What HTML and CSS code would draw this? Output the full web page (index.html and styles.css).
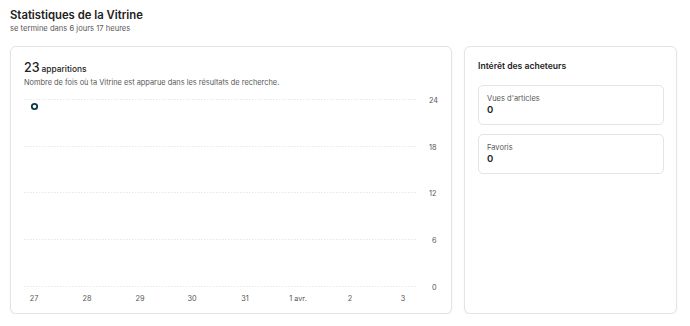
FILE: index.html
```html
<!DOCTYPE html>
<html lang="fr">
<head>
<meta charset="utf-8">
<title>Statistiques de la Vitrine</title>
<link rel="stylesheet" href="styles.css">
</head>
<body>
<header class="page-head">
  <h1 class="page-title">Statistiques de la Vitrine</h1>
  <p class="page-sub">se termine dans 6 jours 17 heures</p>
</header>
<main class="grid">
  <section class="card card-main">
    <h2 class="metric"><span class="metric-num">23</span><span class="metric-label">apparitions</span></h2>
    <p class="metric-desc">Nombre de fois où ta Vitrine est apparue dans les résultats de recherche.</p>
    <svg class="chart" width="416" height="214" viewBox="0 0 416 214">
      <g class="grid-lines">
        <line x1="0" y1="7.5" x2="392" y2="7.5"/>
        <line x1="0" y1="54.5" x2="392" y2="54.5"/>
        <line x1="0" y1="100.5" x2="392" y2="100.5"/>
        <line x1="0" y1="147.5" x2="392" y2="147.5"/>
        <line x1="0" y1="194.5" x2="392" y2="194.5"/>
      </g>
      <g class="y-labels">
        <text x="405" y="10.5">24</text>
        <text x="405" y="57.5">18</text>
        <text x="405" y="103.5">12</text>
        <text x="408" y="150.5">6</text>
        <text x="408" y="197.5">0</text>
      </g>
      <g class="x-labels">
        <text x="10" y="209">27</text>
        <text x="63" y="209">28</text>
        <text x="116" y="209">29</text>
        <text x="168" y="209">30</text>
        <text x="221" y="209">31</text>
        <text x="274" y="209">1 avr.</text>
        <text x="326" y="209">2</text>
        <text x="379" y="209">3</text>
      </g>
      <circle class="dot" cx="10.5" cy="14.5" r="2.7"/>
    </svg>
  </section>
  <section class="card card-side">
    <h2 class="side-title">Intérêt des acheteurs</h2>
    <div class="stat">
      <div class="stat-label">Vues d'articles</div>
      <div class="stat-value">0</div>
    </div>
    <div class="stat">
      <div class="stat-label">Favoris</div>
      <div class="stat-value">0</div>
    </div>
  </section>
</main>
</body>
</html>
```
FILE: styles.css
```css
* { box-sizing: border-box; }
html, body { margin: 0; padding: 0; background: #fff; }
body {
  font-family: Inter, "Noto Sans", sans-serif;
  color: #222;
  padding: 8px 13px 0 10px;
}
.page-title {
  margin: 0;
  font-size: 11.3px;
  font-weight: 600;
  line-height: 15px;
  color: #222;
}
.page-sub {
  margin: 0;
  font-size: 7.6px;
  line-height: 11px;
  color: #595959;
}
.grid {
  display: grid;
  grid-template-columns: 442px 213px;
  column-gap: 12px;
  margin-top: 12px;
}
.card {
  border: 1px solid #e4e4e4;
  border-radius: 6px;
  box-shadow: 0 1px 2px rgba(0,0,0,0.06);
  height: 268px;
  background: #fff;
}
.card-main {
  padding: 13px 0 0 13px;
}
.metric {
  margin: 0;
  display: flex;
  align-items: baseline;
  gap: 2px;
  height: 15px;
  line-height: 15px;
  font-weight: 400;
  color: #222;
}
.metric-num {
  font-size: 12.5px;
  font-weight: 500;
}
.metric-label {
  font-size: 8.4px;
  font-weight: 500;
}
.metric-desc {
  margin: 2px 0 0 0;
  font-size: 7.4px;
  line-height: 12px;
  color: #595959;
}
.chart {
  display: block;
  margin-top: 3px;
  overflow: visible;
}
.grid-lines line {
  stroke: #e8e8e8;
  stroke-width: 1;
  stroke-dasharray: 1.5 1.5;
}
.y-labels text, .x-labels text {
  font-family: Inter, "Noto Sans", sans-serif;
  font-size: 7.3px;
  fill: #555;
}
.x-labels text { text-anchor: middle; }
.dot {
  fill: #fff;
  stroke: #0e3a45;
  stroke-width: 1.8;
}
.card-side {
  padding: 13px 12px 0 13px;
}
.side-title {
  margin: 0 0 12px 0;
  font-size: 8.6px;
  font-weight: 600;
  line-height: 13px;
  color: #222;
}
.stat {
  border: 1px solid #e4e4e4;
  border-radius: 5px;
  height: 40px;
  padding: 8px 8px 0 8px;
  margin-bottom: 9px;
}
.stat-label {
  font-size: 7.5px;
  line-height: 10px;
  color: #595959;
}
.stat-value {
  font-size: 9.5px;
  font-weight: 600;
  line-height: 11px;
  color: #222;
}
```
